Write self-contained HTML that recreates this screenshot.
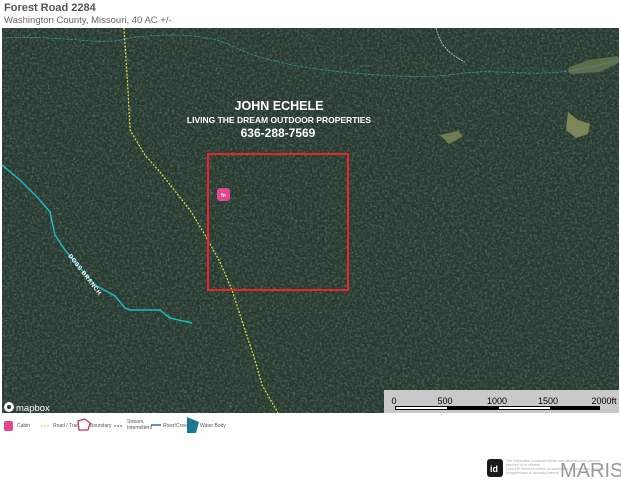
<!DOCTYPE html>
<html><head><style>
body{margin:0;width:621px;height:480px;background:#fff;font-family:"Liberation Sans",sans-serif;position:relative;overflow:hidden}
.t1{position:absolute;left:4px;top:2px;font-size:11px;font-weight:bold;color:#555}
.t2{position:absolute;left:4px;top:15px;font-size:9.5px;color:#666}
.lg{position:absolute;top:423px;font-size:5px;color:#555}
</style></head><body>
<div class="t1">Forest Road 2284</div>
<div class="t2">Washington County, Missouri, 40 AC +/-</div>
<svg style="position:absolute;left:2px;top:28px" width="617" height="385" viewBox="2 28 617 385">
<defs>
<filter id="n" x="0" y="0" width="100%" height="100%"><feTurbulence type="fractalNoise" baseFrequency="0.4" numOctaves="2" seed="3"/><feColorMatrix values="0 0 0 0 0.10  0 0 0 0 0.16  0 0 0 0 0.13  0 0 0 -2 1.2"/></filter>
<filter id="m" x="0" y="0" width="100%" height="100%"><feTurbulence type="fractalNoise" baseFrequency="0.5" numOctaves="1" seed="9"/><feColorMatrix values="0 0 0 0 0.28  0 0 0 0 0.36  0 0 0 0 0.31  0 0 0 1.6 -0.95"/></filter>
</defs>
<rect x="2" y="28" width="617" height="385" fill="#283a30"/>
<rect x="2" y="28" width="617" height="385" filter="url(#n)" opacity="0.7"/>
<rect x="2" y="28" width="617" height="385" filter="url(#m)"/>
<path d="M440 135l18-4 5 5-14 8z" fill="#6f7d52"/>
<path d="M568 112l10 8 12 4-2 10-12 4-10-8z" fill="#7d8658"/>
<path d="M568 68l20-8 30-4 2 6-20 10-30 2z" fill="#5f6d4c"/>
<path d="M2 38C60 35 100 45 120 40S200 30 230 45 300 70 380 75 450 70 500 72 560 75 619 60" stroke="#3f96a0" stroke-width="0.7" fill="none" stroke-dasharray="3 1"/>
<path d="M436 28C440 45 450 55 465 62" stroke="#ccc" stroke-width="0.8" fill="none" stroke-dasharray="2 1"/>
<path d="M124 28L128 90 130 130 145 155 160 172 190 210 205 235 220 262 232 290 245 330 255 360 262 385 278 413" stroke="#e5e04a" stroke-width="1.2" fill="none" stroke-dasharray="2 1.5"/>
<path d="M2 165L20 180 38 198 50 212 55 235 65 250 80 268 95 285 115 296 125 308 130 310 160 310 170 318 192 323" stroke="#1fb7be" stroke-width="1.5" fill="none"/>
<text x="0" y="0" transform="translate(68 256) rotate(52)" fill="#fff" font-size="6" font-weight="bold" letter-spacing="0.5">DOSS BRANCH</text>
<rect x="208" y="154" width="140" height="136" fill="none" stroke="#e8262b" stroke-width="2"/>
<rect x="217" y="188" width="13" height="13" rx="3" fill="#e2478f"/>
<text x="223.5" y="197" fill="#fff" font-size="5" text-anchor="middle" font-weight="bold">fn</text>
<text x="279" y="110" fill="#fff" font-size="12.5" font-weight="bold" text-anchor="middle">JOHN ECHELE</text>
<text x="279" y="123" fill="#fff" font-size="8.5" font-weight="bold" text-anchor="middle">LIVING THE DREAM OUTDOOR PROPERTIES</text>
<text x="278" y="137" fill="#fff" font-size="12" font-weight="bold" text-anchor="middle">636-288-7569</text>
<circle cx="9" cy="407" r="5" fill="#fff"/><circle cx="9" cy="407" r="2" fill="#283a30"/>
<text x="16" y="411" fill="#fff" font-size="9.5">mapbox</text>
<rect x="384" y="390" width="235" height="23" fill="#c9c9c9"/>
<text x="394" y="404" font-size="9" text-anchor="middle">0</text>
<text x="445" y="404" font-size="9" text-anchor="middle">500</text>
<text x="497" y="404" font-size="9" text-anchor="middle">1000</text>
<text x="548" y="404" font-size="9" text-anchor="middle">1500</text>
<text x="604" y="404" font-size="9" text-anchor="middle">2000ft</text>
<rect x="395" y="406" width="205" height="4" fill="#000"/>
<rect x="396" y="407" width="51" height="2" fill="#fff"/>
<rect x="499" y="407" width="51" height="2" fill="#fff"/>
</svg>
<svg style="position:absolute;left:0;top:413px" width="621" height="67">
<rect x="4" y="8" width="9" height="10" rx="2" fill="#e2478f"/>
<path d="M41 13h9" stroke="#d8cc3a" stroke-width="1" stroke-dasharray="2 1"/>
<path d="M78 8l7-2 5 4-2 7h-9z" fill="none" stroke="#c0304a" stroke-width="1.2"/>
<path d="M114 13h8" stroke="#555" stroke-width="1" stroke-dasharray="2 1"/>
<path d="M151 12h10" stroke="#1a7f8c" stroke-width="1.5"/>
<path d="M187 4l12 5-3 11h-9z" fill="#1a7a96"/>
<rect x="487" y="46" width="16" height="18" rx="3" fill="#1a1a1a"/>
<text x="490" y="59" fill="#fff" font-size="9" font-weight="bold">id</text>
<text x="506" y="49" fill="#aaa" font-size="3.5">The information contained herein was obtained from sources</text>
<text x="506" y="53" fill="#aaa" font-size="3.5">deemed to be reliable.</text>
<text x="506" y="57" fill="#aaa" font-size="3.5">Land id® Services makes no warranties or guarantees as to the</text>
<text x="506" y="61" fill="#aaa" font-size="3.5">completeness or accuracy thereof.</text>
<text x="560" y="64" fill="#999" font-size="20">MARIS</text>
</svg>
<div class="lg" style="left:17px">Cabin</div>
<div class="lg" style="left:53px">Road / Trail</div>
<div class="lg" style="left:90px">Boundary</div>
<div class="lg" style="left:127px;top:419px">Stream,<br>Intermittent</div>
<div class="lg" style="left:163px">River/Creek</div>
<div class="lg" style="left:200px">Water Body</div>
</body></html>
